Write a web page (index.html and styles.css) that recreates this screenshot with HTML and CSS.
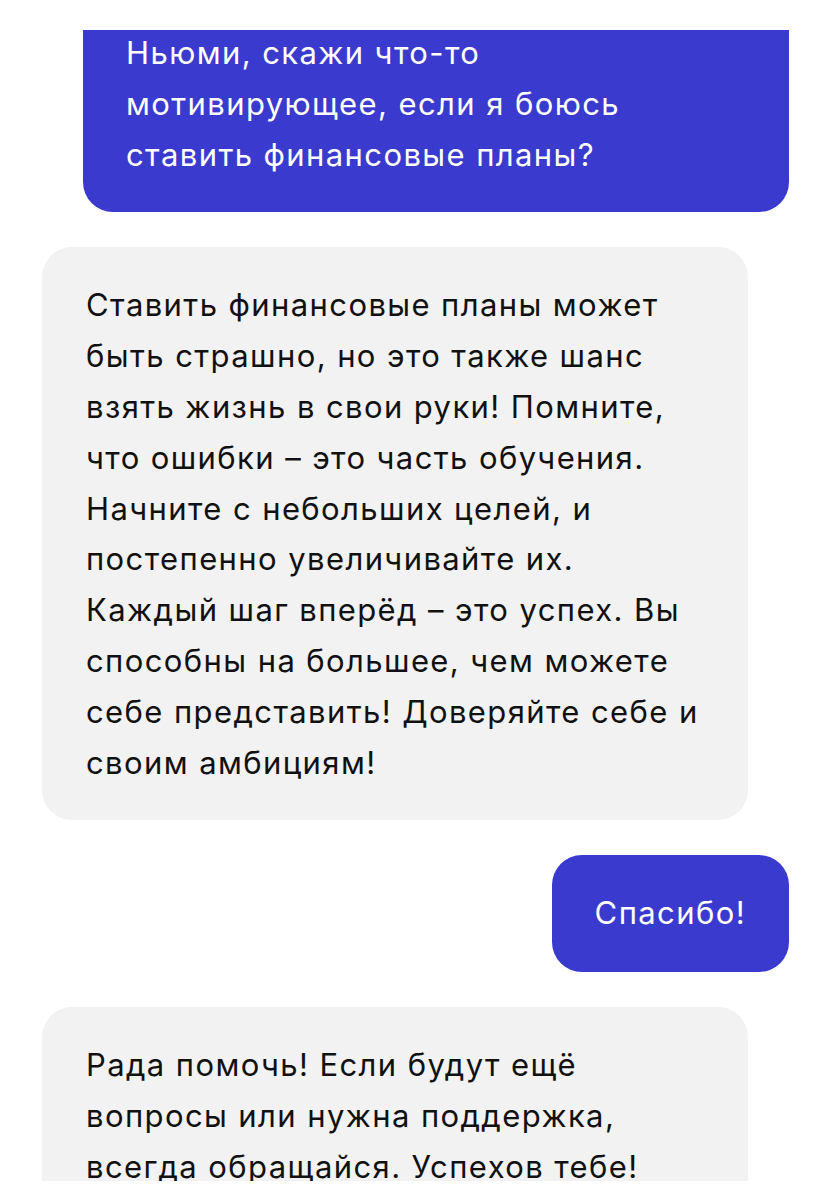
FILE: index.html
```html
<!DOCTYPE html>
<html lang="ru">
<head>
<meta charset="utf-8">
<title>Чат</title>
<link rel="stylesheet" href="styles.css">
</head>
<body>
<div class="viewport">
  <div class="chat">
    <div class="msg msg-out msg-first">
      Ньюми, скажи что-то<br>мотивирующее, если я боюсь<br>ставить финансовые планы?
    </div>
    <div class="msg msg-in">
      Ставить финансовые планы может<br>быть страшно, но это также шанс<br>взять жизнь в свои руки! Помните,<br>что ошибки – это часть обучения.<br>Начните с небольших целей, и<br>постепенно увеличивайте их.<br>Каждый шаг вперёд – это успех. Вы<br>способны на большее, чем можете<br>себе представить! Доверяйте себе и<br>своим амбициям!
    </div>
    <div class="msg msg-out msg-short">Спасибо!</div>
    <div class="msg msg-in">
      Рада помочь! Если будут ещё<br>вопросы или нужна поддержка,<br>всегда обращайся. Успехов тебе!
    </div>
  </div>
</div>
</body>
</html>
```

FILE: styles.css
```css
* { box-sizing: border-box; }
html, body {
  margin: 0;
  padding: 0;
  background: #ffffff;
}
body {
  font-family: Inter, "Noto Sans", sans-serif;
  -webkit-font-smoothing: antialiased;
}
.viewport {
  margin-top: 30px;
  height: 1151px;
  overflow: hidden;
}
.chat {
  display: flex;
  flex-direction: column;
  gap: 35px;
  padding: 0 42px;
}
.msg {
  width: 706px;
  border-radius: 30px;
  padding: 33px 44px 32px;
  font-size: 31px;
  letter-spacing: 1.4px;
  line-height: 50.8px;
  white-space: nowrap;
}
.msg-out {
  align-self: flex-end;
  background: #3a3acf;
  color: #ffffff;
  padding-left: 43px;
}
.msg-first {
  margin-top: -35px;
  border-top-left-radius: 0;
  border-top-right-radius: 0;
}
.msg-short {
  width: auto;
  padding: 33px 43px;
}
.msg-in {
  align-self: flex-start;
  background: #f2f2f2;
  color: #111111;
}
```
